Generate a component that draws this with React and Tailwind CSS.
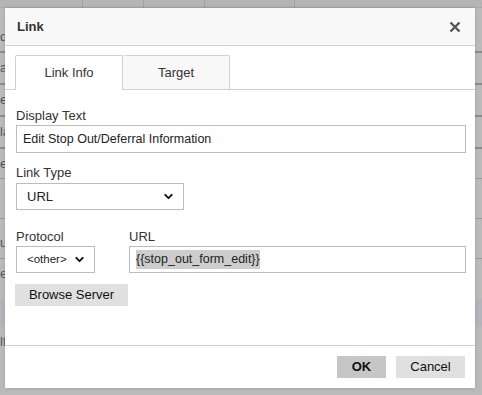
import React from "react";
import { ChevronDown } from "lucide-react";

const Label = ({ children }) => (
  <div className="text-[13px] leading-[16px] text-[#333]">{children}</div>
);

const Select = ({ value, width, textSize }) => (
  <div
    className={`flex h-[27px] ${width} items-center justify-between border border-[#bcbcbc] bg-white pr-[8px] pl-[10px] ${textSize} text-[#222]`}>
    <span>{value}</span>
    <ChevronDown size={13} strokeWidth={3.5} className="text-[#111]" />
  </div>
);

const App = () => {
  return (
    <div
      className="relative h-[395px] w-[482px] overflow-hidden bg-[#bababa]"
      style={{ fontFamily: '"Liberation Sans", Arial, sans-serif' }}>
      {/* page behind the overlay */}
      <div className="flex h-[8px] border-b border-[#a8a8a8] bg-[#b4b4b4]">
        <div className="w-[83px] border-r border-[#9e9e9e]" />
        <div className="w-[61px] border-r border-[#9e9e9e]" />
        <div className="w-[61px] border-r border-[#9e9e9e]" />
        <div className="w-[90px] border-r border-[#9e9e9e]" />
      </div>
      <div className="flex flex-col pt-[14px] text-[13px] text-[#555]">
        <div className="h-[31px] border-b-2 border-double border-[#8a8a8a] pt-[5px]">di</div>
        <div className="h-[32px] border-b-2 border-double border-[#8a8a8a] pt-[5px]">a</div>
        <div className="h-[32px] border-b-2 border-double border-[#8a8a8a] pt-[5px]">e</div>
        <div className="h-[32px] border-b-2 border-double border-[#8a8a8a] pt-[5px]">la</div>
        <div className="h-[30px] border-b border-[#9a9a9a] pt-[5px]">e</div>
        <div className="h-[40px] border-b border-[#9a9a9a]" />
        <div className="h-[40px] border-b border-[#9a9a9a] pt-[14px]">ul</div>
        <div className="h-[40px] pt-[5px]">e</div>
        <div className="h-[28px] bg-[#b2b6ba]" />
        <div className="h-[30px] pt-[5px]">lt</div>
      </div>

      {/* dialog */}
      <div className="absolute top-[8px] left-[5px] flex h-[380px] w-[470px] flex-col bg-white text-[#333] shadow-[0_0_3px_rgba(0,0,0,0.15)]">
        <div className="flex h-[38px] items-center justify-between border-b border-[#d1d1d1] bg-[#f8f8f8] pr-[14px] pl-[12px]">
          <span className="text-[13px] font-bold text-[#333]">Link</span>
          <svg width="12" height="12" viewBox="0 0 12 12">
            <path d="M1.5 1.5 L10.5 10.5 M10.5 1.5 L1.5 10.5" stroke="#555" strokeWidth="2.4" />
          </svg>
        </div>

        <div className="flex h-[44px] items-end border-b border-[#d1d1d1] pl-[10px]">
          <div className="relative top-[1px] flex h-[35px] w-[108px] items-center justify-center rounded-t-[2px] border border-b-0 border-[#d1d1d1] bg-white text-[13px] text-[#333]">
            Link Info
          </div>
          <div className="flex h-[34px] w-[107px] items-center justify-center rounded-t-[2px] border border-b-0 border-l-0 border-[#d1d1d1] bg-[#f8f8f8] text-[13px] text-[#333]">
            Target
          </div>
        </div>

        <div className="flex flex-1 flex-col pt-[18px] pr-[9px] pl-[11px]">
          <Label>Display Text</Label>
          <div className="mt-[1px] flex h-[28px] items-center border border-[#bcbcbc] px-[6px] text-[12.5px] text-[#222]">
            Edit Stop Out/Deferral Information
          </div>

          <div className="mt-[12px]">
            <Label>Link Type</Label>
          </div>
          <div className="mt-[2px]">
            <Select value="URL" width="w-[168px]" textSize="text-[13px]" />
          </div>

          <div className="mt-[19px] flex gap-[34px]">
            <div className="flex flex-col gap-[1px]">
              <Label>Protocol</Label>
              <Select value="<other>" width="w-[79px]" textSize="text-[11.5px]" />
            </div>
            <div className="flex flex-1 flex-col gap-[1px]">
              <Label>URL</Label>
              <div className="flex h-[27px] items-center border border-[#bcbcbc] px-[6px] text-[12.5px] text-[#222]">
                <span className="bg-[#cdcdcd]">{"{{stop_out_form_edit}}"}</span>
              </div>
            </div>
          </div>

          <button className="mt-[11px] -ml-[1px] flex h-[22px] w-[113px] items-center justify-center bg-[#e0e0e0] text-[13px] text-[#111]">
            Browse Server
          </button>
        </div>

        <div className="flex h-[43px] items-start justify-end gap-[10px] border-t border-[#d1d1d1] pt-[10px] pr-[10px]">
          <button className="flex h-[22px] w-[49px] items-center justify-center bg-[#c6c6c6] text-[13px] font-bold text-[#111]">
            OK
          </button>
          <button className="flex h-[22px] w-[69px] items-center justify-center bg-[#e0e0e0] text-[13px] text-[#111]">
            Cancel
          </button>
        </div>
      </div>
    </div>
  );
};

export default App;
